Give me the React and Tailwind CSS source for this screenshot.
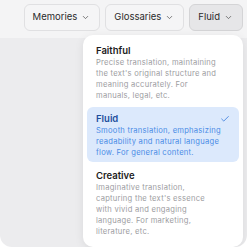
import React from "react";
import { ChevronDown, Check } from "lucide-react";

const options = [
  {
    name: "Faithful",
    lines: ["Precise translation, maintaining", "the text's original structure and", "meaning accurately. For", "manuals, legal, etc."],
  },
  {
    name: "Fluid",
    lines: ["Smooth translation, emphasizing", "readability and natural language", "flow. For general content."],
    active: true,
  },
  {
    name: "Creative",
    lines: [
      "Imaginative translation,",
      "capturing the text's essence",
      "with vivid and engaging",
      "language. For marketing,",
      "literature, etc.",
    ],
  },
];

const HeaderButton = ({ label, active }) => (
  <button
    className={
      "flex h-[27px] items-center gap-[4px] rounded-[6px] border pl-[8px] pr-[9px] text-[9.5px] text-[#2b2b2b] " +
      (active ? "border-[#d4d4d6] bg-[#e6e6e8]" : "border-[#e0e0e2] bg-[#f5f5f6]")
    }
  >
    {label}
    <ChevronDown size={9} strokeWidth={2} className="text-[#555]" />
  </button>
);

export default function App() {
  return (
    <div className="h-[250px] w-[250px] bg-white" style={{ fontFamily: "Inter, 'Noto Sans', sans-serif" }}>
      <div className="relative flex h-[247px] w-[247px] flex-col overflow-hidden rounded-b-[12px] bg-[#ececee]">
        <div className="flex h-[38px] justify-end gap-[5px] bg-[#f4f4f5] pr-[4px] pt-[4px]">
          <HeaderButton label="Memories" />
          <HeaderButton label="Glossaries" />
          <HeaderButton label="Fluid" active />
        </div>

        <div className="absolute left-[83px] top-[35px] flex w-[160px] flex-col gap-[2px] rounded-[10px] bg-white px-[4px] pb-[6px] pt-[4px] shadow-[0_2px_10px_rgba(0,0,0,0.08)]">
          {options.map((o) => (
            <div
              key={o.name}
              className={
                "relative rounded-[6px] pb-[4px] pl-[9px] pr-[8px] pt-[6px] " + (o.active ? "bg-[#dce9fc]" : "")
              }
            >
              <div
                className={
                  "text-[9.5px] font-semibold leading-[12px] " + (o.active ? "text-[#1d4f9e]" : "text-[#1c1c1c]")
                }
              >
                {o.name}
              </div>
              <div
                className={
                  "text-[7.6px] leading-[11px] tracking-[0.25px] " + (o.active ? "text-[#4a8ce6]" : "text-[#9d9d9f]")
                }
              >
                {o.lines.map((l) => (
                  <div key={l} className="whitespace-nowrap">
                    {l}
                  </div>
                ))}
              </div>
              {o.active && (
                <Check size={10} strokeWidth={2} className="absolute right-[9px] top-[7px] text-[#3b7ddd]" />
              )}
            </div>
          ))}
        </div>
      </div>
    </div>
  );
}
